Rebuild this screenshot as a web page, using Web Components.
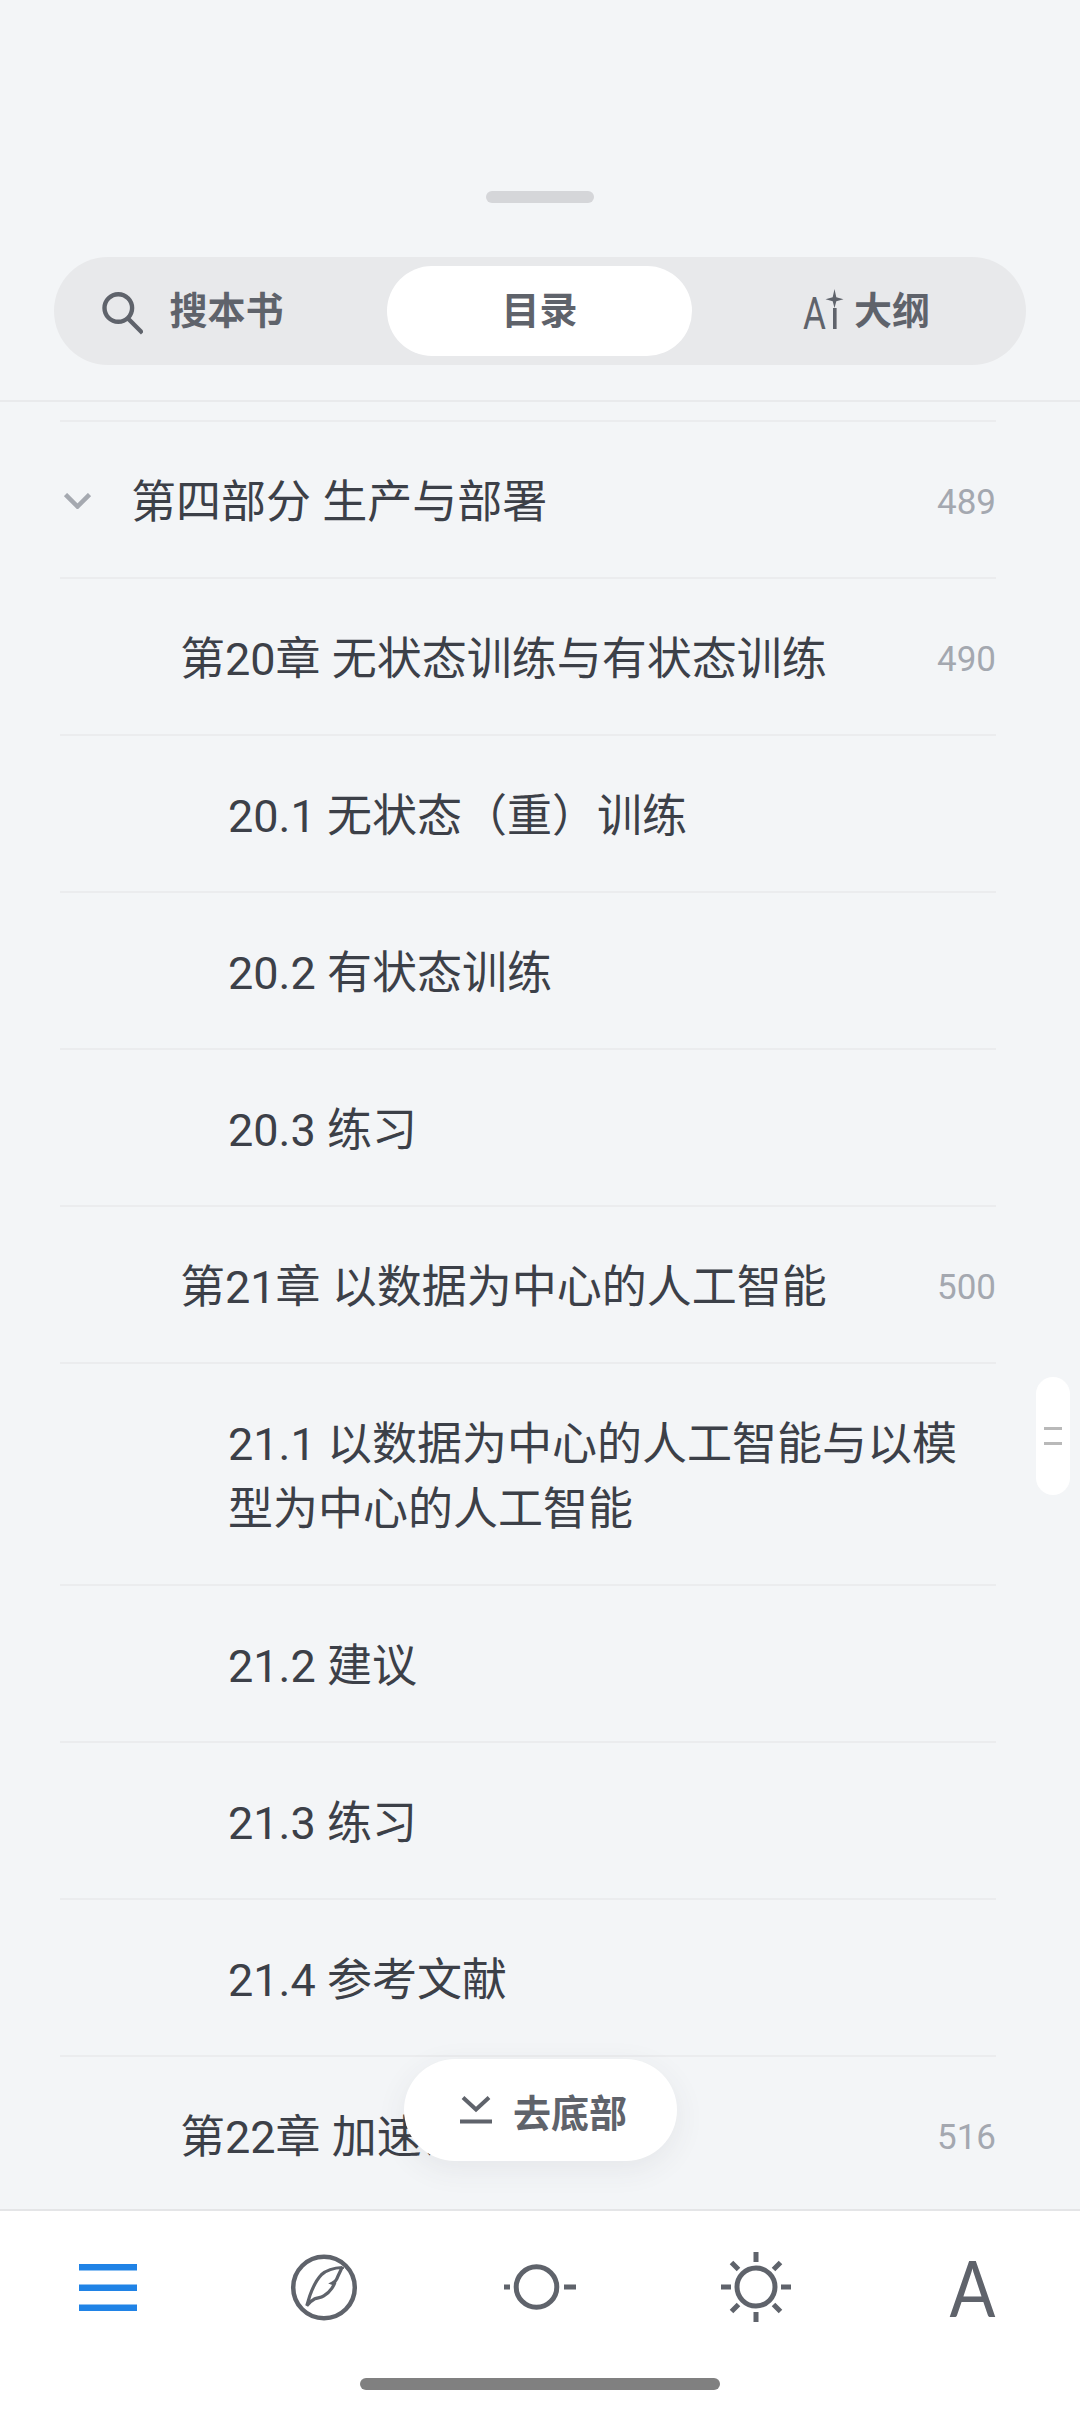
<!DOCTYPE html>
<html lang="zh-CN">
  <head>
    <meta charset="UTF-8" />
    <title>目录</title>
    <style>
      html, body {
        margin: 0;
        height: 100%;
        background: #f3f5f7;
        font-family: Roboto, "Noto Sans CJK SC", sans-serif;
      }
    </style>
  </head>
  <body>
    <toc-sheet>
      <seg-tabs slot="tabs">
        <seg-tab shift="-48">
          <svg slot="icon" width="44" height="50" viewBox="9 3 44 50" style="margin-right:26px" fill="none" stroke="#5f636b">
            <circle cx="28.3" cy="25" r="13.8" stroke-width="4.4" />
            <path d="M38.5 36l14 14" stroke-width="4.4" />
          </svg>
          搜本书
        </seg-tab>
        <seg-tab active>目录</seg-tab>
        <seg-tab shift="6">
          <svg slot="icon" width="42" height="60" viewBox="0 -8 42 60" style="margin-right:9px" fill="#5f636b">
            <text transform="translate(0 40) scale(.78 1)" font-family="Roboto" font-weight="400" font-size="45">A</text>
            <rect x="30" y="19" width="3.6" height="21" />
            <path d="M31.5 0l1.8 8.2 7.2 2-7.2 2-1.8 6.8-1.8-6.800-7.200-2 7.200-2z" />
          </svg>
          大纲
        </seg-tab>
      </seg-tabs>

      <toc-row class="first" level="1" page="489" open>第四部分 生产与部署</toc-row>
      <toc-row level="2" page="490">第20章 无状态训练与有状态训练</toc-row>
      <toc-row level="3">20.1 无状态（重）训练</toc-row>
      <toc-row level="3">20.2 有状态训练</toc-row>
      <toc-row level="3">20.3 练习</toc-row>
      <toc-row level="2" page="500">第21章 以数据为中心的人工智能</toc-row>
      <toc-row level="3">21.1 以数据为中心的人工智能与以模型为中心的人工智能</toc-row>
      <toc-row level="3">21.2 建议</toc-row>
      <toc-row level="3">21.3 练习</toc-row>
      <toc-row level="3">21.4 参考文献</toc-row>
      <toc-row level="2" page="516">第22章 加速训练</toc-row>

      <scroll-thumb slot="over"></scroll-thumb>
      <float-pill slot="over">去底部</float-pill>

      <bottom-bar slot="bar">
        <svg width="58" height="47" viewBox="0 0 58 47" fill="#2083e6">
          <rect width="58" height="6.500" />
          <rect y="20.500" width="58" height="6.500" />
          <rect y="40.500" width="58" height="6.500" />
        </svg>
        <svg width="90" height="85" viewBox="-2.300 -0.800 90 85" fill="none" stroke="#5f636b">
          <circle cx="42.700" cy="41.700" r="30.800" stroke-width="4.500" />
          <path d="M61 21.700C52 22 46 23.500 40 29c-6 6-9 14-11.500 21L25.500 60c2.500-3 5-5.500 8-7 3-1.200 6-1 9-3 3-1.800 6-4.500 8-7.500 1-1.500 2-3 2.500-4.300l-2-.7c2-1 3.500-2 4.500-4.500 1.600-4 4-8.500 5.500-11.800z" stroke-width="3.200" />
        </svg>
        <svg width="72" height="12" viewBox="503 2281 72 12" style="overflow:visible" fill="none" stroke="#5f636b">
          <circle cx="535.500" cy="2287" r="20.300" stroke-width="5" />
          <path d="M503 2287h6M563 2287h12" stroke-width="5" />
        </svg>
        <svg width="72" height="72" viewBox="-36 -36 72 72" fill="none" stroke="#5f636b" stroke-width="5">
          <circle r="19" />
          <path d="M0-35v10M0 25v10M-35 0h10M25 0h10M-24.500-24.500l7 7M17.500 17.500l7 7M24.500-24.500l-7 7M-17.500 17.500l-7 7" />
        </svg>
        <span style="font:400 78px/78px Lato;color:#5f636b;display:block;transform:scaleX(.87);">A</span>
      </bottom-bar>
    </toc-sheet>

    <template id="toc-sheet">
      <style>
        :host {
          display: flex;
          flex-direction: column;
          height: 2412px;
          background: #f3f5f7;
          overflow: hidden;
        }
        .handle {
          width: 108px;
          height: 12px;
          margin: 191px auto 54px;
          border-radius: 6px;
          background: #d5d6d9;
        }
        .head {
          padding: 0 54px 35px;
          border-bottom: 2px solid #e9eaec;
        }
        .list-wrap {
          position: relative;
          flex: 1;
          min-height: 0;
          overflow: hidden;
        }
        .list {
          padding: 18px 84px 0 60px;
        }
      </style>
      <div class="handle"></div>
      <div class="head"><slot name="tabs"></slot></div>
      <div class="list-wrap">
        <div class="list"><slot></slot></div>
        <slot name="over"></slot>
      </div>
      <slot name="bar"></slot>
    </template>

    <template id="seg-tabs">
      <style>
        :host {
          display: grid;
          grid-template-columns: repeat(3, 305px);
          gap: 19px;
          padding: 9px;
          height: 90px;
          border-radius: 54px;
          background: #e8e9eb;
        }
      </style>
      <slot></slot>
    </template>

    <template id="seg-tab">
      <style>
        :host {
          display: flex;
          align-items: center;
          justify-content: center;
          height: 90px;
          border-radius: 45px;
          font-size: 38px;
          line-height: 50px;
          font-weight: 700;
          color: #5f636b;
        }
        :host([active]) {
          background: #fff;
        }
      </style>
      <slot name="icon"></slot><slot></slot>
    </template>

    <template id="toc-row">
      <style>
        :host {
          display: flex;
          align-items: flex-start;
          padding: 48px 0 42px;
          border-bottom: 2px solid #ebecee;
          font-size: 45px;
          line-height: 65px;
          color: #3c4048;
        }
        :host(.first) { border-top: 2px solid #ebecee; }
        :host([level="1"]) { padding-left: 71px; position: relative; }
        :host([level="2"]) { padding-left: 120px; }
        :host([level="3"]) { padding-left: 168px; }
        .chev {
          display: none;
          position: absolute;
          left: 4px;
          top: 71px;
        }
        :host([open]) .chev { display: block; }
        .title { flex: 1; min-width: 0; }
        .page {
          margin-left: 40px;
          font-size: 35px;
          color: #a4a8b0;
        }
        .page:empty { margin-left: 0; }
      </style>
      <svg class="chev" width="27" height="16" viewBox="0 0 27 16" fill="none" stroke="#a5a9b0" stroke-width="4.500">
        <path d="M1.500 1.500L13.500 13.500 25.500 1.500" />
      </svg>
      <div class="title"><slot></slot></div>
      <div class="page"></div>
    </template>

    <template id="float-pill">
      <style>
        :host {
          position: absolute;
          z-index: 2;
          left: 404px;
          bottom: 48px;
          display: flex;
          align-items: center;
          width: 273px;
          height: 102px;
          box-sizing: border-box;
          padding-left: 56px;
          border-radius: 51px;
          background: #fff;
          box-shadow: 0 8px 30px rgba(60, 64, 72, 0.08);
          font-size: 38px;
          font-weight: 700;
          color: #5f636b;
        }
        svg { margin-right: 21px; }
      </style>
      <svg width="32" height="28" viewBox="0 0 32 28" fill="none" stroke="#5f636b" stroke-width="4">
        <path d="M3 1.500L16 13.500 29 1.500M0 25.500h32" />
      </svg>
      <slot></slot>
    </template>

    <template id="scroll-thumb">
      <style>
        :host {
          position: absolute;
          z-index: 2;
          top: 975px;
          right: 10px;
          display: flex;
          flex-direction: column;
          align-items: center;
          justify-content: center;
          gap: 12px;
          width: 34px;
          height: 118px;
          border-radius: 17px;
          background: #fff;
        }
        i {
          width: 18px;
          height: 3px;
          background: #b9b9b9;
        }
      </style>
      <i></i><i></i>
    </template>

    <template id="bottom-bar">
      <style>
        :host {
          display: block;
          flex: none;
          height: 203px;
          box-sizing: border-box;
          border-top: 2px solid #e4e5e7;
          background: #fff;
        }
        .icons {
          display: grid;
          grid-template-columns: repeat(5, 216px);
          height: 152px;
        }
        .icons ::slotted(*) {
          justify-self: center;
          align-self: center;
        }
        .home {
          width: 360px;
          height: 12px;
          margin: 15px auto 0;
          border-radius: 6px;
          background: #808080;
        }
      </style>
      <div class="icons"><slot></slot></div>
      <div class="home"></div>
    </template>

    <script>
      // every element just clones its template, toc-row also fills in the page number
      class Base extends HTMLElement {
        constructor() {
          super();
          const tmp = document.querySelector('#' + this.localName).content;
          this.attachShadow({ mode: 'open' }).appendChild(tmp.cloneNode(true));
        }
      }

      class TocSheet extends Base {}
      class SegTabs extends Base {}
      class SegTab extends Base {
        connectedCallback() {
          const shift = Number(this.getAttribute('shift') || 0);
          if (shift < 0) this.style.paddingRight = -shift + 'px';
          if (shift > 0) this.style.paddingLeft = shift + 'px';
        }
      }
      class TocRow extends Base {
        connectedCallback() {
          const page = this.getAttribute('page');
          if (page) this.shadowRoot.querySelector('.page').textContent = page;
        }
      }
      class FloatPill extends Base {}
      class ScrollThumb extends Base {}
      class BottomBar extends Base {}

      customElements.define('toc-sheet', TocSheet);
      customElements.define('seg-tabs', SegTabs);
      customElements.define('seg-tab', SegTab);
      customElements.define('toc-row', TocRow);
      customElements.define('float-pill', FloatPill);
      customElements.define('scroll-thumb', ScrollThumb);
      customElements.define('bottom-bar', BottomBar);
    </script>
  </body>
</html>
